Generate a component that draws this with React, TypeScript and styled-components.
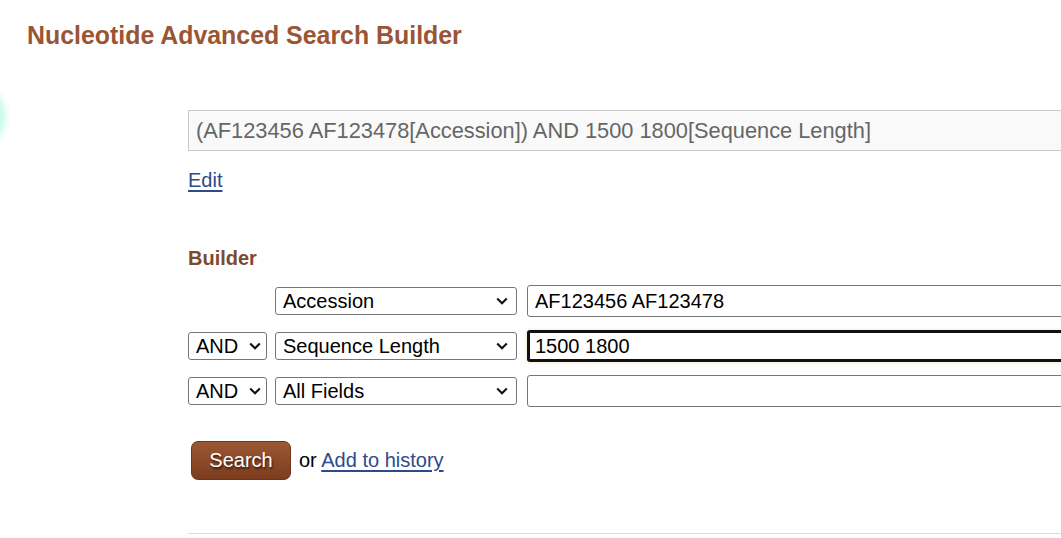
import React, { useState } from 'react';
import styled, { createGlobalStyle } from 'styled-components';

const GlobalStyle = createGlobalStyle`
  html, body {
    margin: 0;
    padding: 0;
    background: #ffffff;
    overflow: hidden;
  }
  body {
    font-family: "Liberation Sans", Arial, sans-serif;
    color: #000;
  }
`;

type Term = {
  op: string | null;
  field: string;
  value: string;
};

const initialTerms: Term[] = [
  { op: null, field: 'Accession', value: 'AF123456 AF123478' },
  { op: 'AND', field: 'Sequence Length', value: '1500 1800' },
  { op: 'AND', field: 'All Fields', value: '' },
];

const Chevron = () => (
  <svg width="12" height="8" viewBox="0 0 12 8">
    <path d="M1.2 1.5 L6 6.2 L10.8 1.5" fill="none" stroke="#111" strokeWidth="2.1" />
  </svg>
);

export default function App() {
  const [terms, setTerms] = useState(initialTerms);

  const query = terms
    .filter(t => t.value)
    .map(t => `${t.value}[${t.field}]`)
    .reduce((acc, cur, i) => (i === 0 ? cur : `(${acc}) AND ${cur}`), '');

  const update = (i: number, value: string) => {
    setTerms(terms.map((t, j) => (j === i ? { ...t, value } : t)));
  };

  return (
    <Page>
      <GlobalStyle />
      <Blob />
      <Title>Nucleotide Advanced Search Builder</Title>
      <Main>
        <QueryBox>{query}</QueryBox>
        <EditLink href="#">Edit</EditLink>
        <SectionLabel>Builder</SectionLabel>
        <Rows>
          {terms.map((t, i) => (
            <Row key={i}>
              {t.op ? (
                <SelectBox $tight>
                  <span>{t.op}</span>
                  <Chevron />
                </SelectBox>
              ) : (
                <div />
              )}
              <SelectBox>
                <span>{t.field}</span>
                <Chevron />
              </SelectBox>
              <TermInput
                $focused={i === 1}
                value={t.value}
                onChange={e => update(i, e.target.value)}
              />
            </Row>
          ))}
        </Rows>
        <Actions>
          <SearchButton>Search</SearchButton>
          <span>
            or <TextLink href="#">Add to history</TextLink>
          </span>
        </Actions>
        <Rule />
      </Main>
    </Page>
  );
}

const Page = styled.div`
  position: relative;
  width: 1061px;
  height: 538px;
  overflow: hidden;
`;

const Blob = styled.div`
  position: absolute;
  left: -40px;
  top: 88px;
  width: 46px;
  height: 56px;
  border-radius: 50%;
  background: #c9fbe9;
  filter: blur(3px);
`;

const Title = styled.h1`
  margin: 0;
  padding: 21px 0 0 27px;
  font-size: 24.9px;
  font-weight: bold;
  line-height: 29px;
  color: #9a5534;
`;

const Main = styled.div`
  width: 1000px;
  margin: 60px 0 0 188px;
  display: flex;
  flex-direction: column;
  align-items: flex-start;
`;

const QueryBox = styled.div`
  box-sizing: border-box;
  width: 100%;
  height: 41px;
  padding: 0 7px;
  display: flex;
  align-items: center;
  border: 1px solid #c8c8c8;
  background: #f9f9f9;
  color: #666;
  font-size: 21.8px;
  white-space: nowrap;
`;

const TextLink = styled.a`
  color: #2e4a8c;
  font-size: 20px;
  text-decoration: underline;
  text-underline-offset: 3px;
`;

const EditLink = styled(TextLink)`
  margin-top: 18px;
`;

const SectionLabel = styled.div`
  margin-top: 55px;
  font-size: 20px;
  font-weight: bold;
  color: #7d4a2e;
`;

const Rows = styled.div`
  width: 100%;
  margin-top: 15px;
  display: flex;
  flex-direction: column;
  gap: 13px;
`;

const Row = styled.div`
  display: grid;
  grid-template-columns: 79px 242px 1fr;
  column-gap: 8px;
  align-items: center;

  & > :last-child {
    margin-left: 2px;
  }
`;

const SelectBox = styled.div<{ $tight?: boolean }>`
  box-sizing: border-box;
  height: 28px;
  padding: 0 ${p => (p.$tight ? '5px' : '8px')} 0 7px;
  display: flex;
  align-items: center;
  justify-content: space-between;
  border: 1px solid #767676;
  border-radius: 3px;
  background: #fff;
  font-size: 20px;
  white-space: nowrap;
`;

const TermInput = styled.input<{ $focused?: boolean }>`
  box-sizing: border-box;
  height: 32px;
  padding: 0 ${p => (p.$focused ? '5px' : '7px')};
  border: ${p => (p.$focused ? '3px solid #111' : '1px solid #767676')};
  border-radius: 3px;
  font-family: "Liberation Sans", Arial, sans-serif;
  font-size: 20px;
  color: #000;
  outline: none;
  box-shadow: ${p => (p.$focused ? '0 0 3px 1px #f4ecd8' : 'none')};
`;

const Actions = styled.div`
  margin-top: 34px;
  margin-left: 3px;
  display: flex;
  align-items: center;
  gap: 8px;
  font-size: 20px;
`;

const SearchButton = styled.button`
  box-sizing: border-box;
  width: 100px;
  height: 39px;
  border: 1px solid #6e3519;
  border-radius: 7px;
  background: linear-gradient(#9c5834, #7b3c1d);
  color: #fff;
  font-family: "Liberation Sans", Arial, sans-serif;
  font-size: 20px;
  text-shadow: 1px 2px 2px rgba(40, 15, 0, 0.8);
  cursor: pointer;
`;

const Rule = styled.div`
  width: 100%;
  margin-top: 53px;
  border-top: 1px solid #dcdcdc;
`;
